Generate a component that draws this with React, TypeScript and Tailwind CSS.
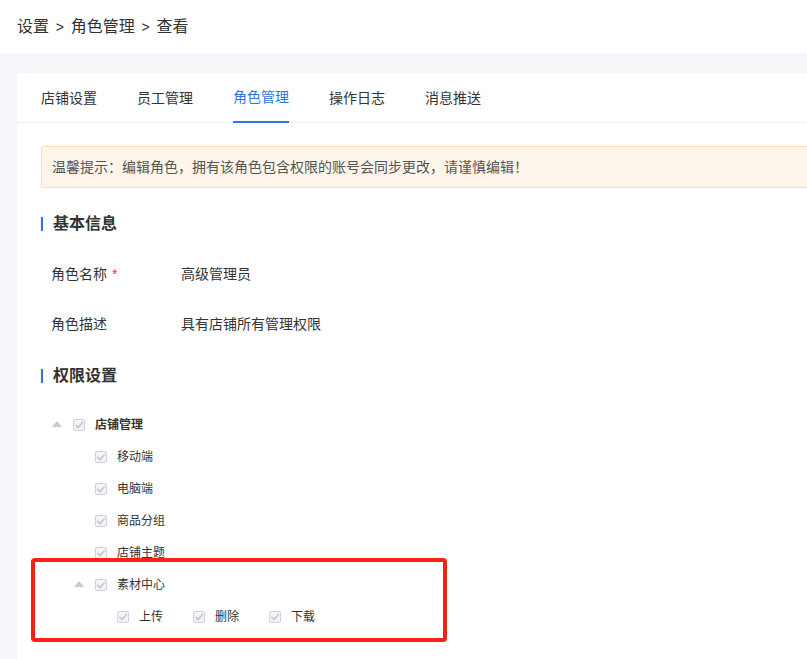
const TABS = ['店铺设置', '员工管理', '角色管理', '操作日志', '消息推送'];

function Checkbox() {
  return (
    <span className="flex h-3 w-3 shrink-0 items-center justify-center rounded-[2px] border border-[#d0d3d9] bg-[#f2f3f6]">
      <svg width="10" height="10" viewBox="0 0 10 10" aria-hidden="true">
        <path d="M1.4 5 L4 7.6 L8.8 2.2" fill="none" stroke="#c3c6cd" strokeWidth="1.6" />
      </svg>
    </span>
  );
}

function Caret() {
  return (
    <svg width="10" height="6" viewBox="0 0 10 6" className="mb-[2px] shrink-0" aria-hidden="true">
      <path d="M5 0 L10 6 L0 6 Z" fill="#c8cbd3" />
    </svg>
  );
}

function SectionTitle({ children }: { children: string }) {
  return (
    <div className="flex items-center gap-[10px]">
      <span className="h-[14px] w-[2px] bg-[#2d74e8]" />
      <span className="text-base leading-6 font-bold text-[#333]">{children}</span>
    </div>
  );
}

function Field({ label, value, required }: { label: string; value: string; required?: boolean }) {
  return (
    <div className="flex h-[50px] items-center pl-[10px] text-sm text-[#333]">
      <span className="w-[130px]">
        {label}
        {required && <span className="ml-[5px] text-[#f0304c]">*</span>}
      </span>
      <span>{value}</span>
    </div>
  );
}

function TreeRow({ label, caret, bold, pad }: { label: string; caret?: boolean; bold?: boolean; pad: string }) {
  return (
    <div className={`flex h-8 items-center text-xs text-[#333] ${pad} ${bold ? 'font-bold' : ''}`}>
      {caret && <span className="mr-[11px] flex"><Caret /></span>}
      <Checkbox />
      <span className="ml-[10px]">{label}</span>
    </div>
  );
}

export default function App() {
  return (
    <div
      className="h-[659px] w-[807px] overflow-hidden bg-[#f5f6fa]"
      style={{ fontFamily: '"Liberation Sans", "Noto Sans CJK SC", sans-serif' }}
    >
      <header className="flex h-[53px] items-center bg-white pl-[17px] text-base text-[#333]">
        <span>设置</span>
        <span className="mx-[6.75px] text-sm">&gt;</span>
        <span>角色管理</span>
        <span className="mx-[6.75px] text-sm">&gt;</span>
        <span>查看</span>
      </header>

      <main className="mt-5 ml-[17px] h-[586px] w-[830px] bg-white">
        <nav className="flex h-[50px] gap-10 border-b border-[#eeeff2] pl-6 text-sm text-[#333]">
          {TABS.map((tab) => (
            <span
              key={tab}
              className={
                tab === '角色管理'
                  ? 'flex h-[50px] items-center border-b-2 border-[#2d74e8] text-[#2d74e8]'
                  : 'flex h-[50px] items-center'
              }
            >
              {tab}
            </span>
          ))}
        </nav>

        <div className="px-6 pt-[23px]">
          <div className="flex h-[42px] items-center rounded-[2px] border border-[#fbdfb4] bg-[#fef5ea] pl-[10px] text-sm text-[#555]">
            温馨提示：编辑角色，拥有该角色包含权限的账号会同步更改，请谨慎编辑！
          </div>

          <div className="mt-6">
            <SectionTitle>基本信息</SectionTitle>
          </div>
          <div className="mt-[13px]">
            <Field label="角色名称" value="高级管理员" required />
            <Field label="角色描述" value="具有店铺所有管理权限" />
          </div>
          <div className="mt-[15px]">
            <SectionTitle>权限设置</SectionTitle>
          </div>

          <div className="mt-[21px]">
            <TreeRow label="店铺管理" caret bold pad="pl-[11px]" />
            <TreeRow label="移动端" pad="pl-[54px]" />
            <TreeRow label="电脑端" pad="pl-[54px]" />
            <TreeRow label="商品分组" pad="pl-[54px]" />
            <TreeRow label="店铺主题" pad="pl-[54px]" />
            <TreeRow label="素材中心" caret pad="pl-[33px]" />
            <div className="flex h-8 items-center gap-[30px] pl-[76px] text-xs text-[#333]">
              {['上传', '删除', '下载'].map((item) => (
                <span key={item} className="flex items-center gap-[10px]">
                  <Checkbox />
                  {item}
                </span>
              ))}
            </div>
          </div>
        </div>
      </main>

      {/* annotation drawn over the screenshot */}
      <div className="absolute top-[558px] left-[31px] h-[84px] w-[416px] rounded-[4px] border-[4px] border-[#fb2016]" />
    </div>
  );
}
